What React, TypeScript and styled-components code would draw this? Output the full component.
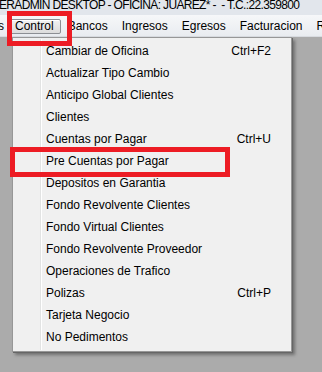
import React from 'react';
import styled, { createGlobalStyle } from 'styled-components';

const COLORS = {
    desktop: '#ababab',
    title: '#e2e6ec',
    menuBg: '#f0f0f0',
    text: '#000000',
    red: '#ed1c24',
    border: '#979797',
};

const GlobalStyle = createGlobalStyle`
    html, body {
        margin: 0;
        padding: 0;
        background: ${COLORS.desktop};
    }
    * {
        box-sizing: border-box;
    }
`;

const Screen = styled.div`
    position: relative;
    width: 322px;
    height: 372px;
    overflow: hidden;
    background: ${COLORS.desktop};
    font-family: 'Liberation Sans', Arial, sans-serif;
    font-size: 12px;
    color: ${COLORS.text};
`;

const TitleBar = styled.div`
    height: 15px;
    background: ${COLORS.title};
    font-size: 12px;
    letter-spacing: -0.65px;
    line-height: 11px;
    white-space: nowrap;
    overflow: hidden;
    margin-left: -1px;
`;

const MenuBar = styled.div`
    height: 22px;
    display: flex;
    align-items: center;
    padding-top: 2px;
    background: linear-gradient(#f6f7f9, #e9ecf0);
    border-bottom: 1px solid #d8dbe0;
    font-size: 12px;
    white-space: nowrap;
    overflow: hidden;
`;

const MenuBarItem = styled.div<{ $active?: boolean }>`
    flex: none;
    height: 15px;
    line-height: 13px;
    padding: 0 6px;
    border: 1px solid ${(p) => (p.$active ? '#8c8f94' : 'transparent')};
    border-radius: 2px;
    background: ${(p) => (p.$active ? 'linear-gradient(#f2f2f2, #dcdcdc)' : 'transparent')};
    box-shadow: ${(p) => (p.$active ? 'inset 1px 1px 0 #fff' : 'none')};
`;

const Dropdown = styled.div`
    position: absolute;
    left: 12px;
    top: 37px;
    width: 280px;
    padding: 2px 0 3px 0;
    background: ${COLORS.menuBg};
    border: 1px solid ${COLORS.border};
    box-shadow: 1px 1px 0 #666, 3px 3px 3px rgba(0, 0, 0, 0.35);
    display: flex;
    flex-direction: column;
`;

const Gutter = styled.div`
    position: absolute;
    left: 27px;
    top: 1px;
    bottom: 1px;
    width: 2px;
    border-left: 1px solid #e2e3e3;
    border-right: 1px solid #ffffff;
`;

const Item = styled.div`
    height: 22px;
    display: flex;
    align-items: center;
    justify-content: space-between;
    padding: 0 20px 0 33px;
    white-space: nowrap;
`;

const Shortcut = styled.span`
    color: ${COLORS.text};
`;

const Highlight = styled.div`
    position: absolute;
    border: 5px solid ${COLORS.red};
    pointer-events: none;
`;

const MENU_ITEMS: { label: string; shortcut?: string }[] = [
    { label: 'Cambiar de Oficina', shortcut: 'Ctrl+F2' },
    { label: 'Actualizar Tipo Cambio' },
    { label: 'Anticipo Global Clientes' },
    { label: 'Clientes' },
    { label: 'Cuentas por Pagar', shortcut: 'Ctrl+U' },
    { label: 'Pre Cuentas por Pagar' },
    { label: 'Depositos en Garantia' },
    { label: 'Fondo Revolvente Clientes' },
    { label: 'Fondo Virtual Clientes' },
    { label: 'Fondo Revolvente Proveedor' },
    { label: 'Operaciones de Trafico' },
    { label: 'Polizas', shortcut: 'Ctrl+P' },
    { label: 'Tarjeta Negocio' },
    { label: 'No Pedimentos' },
];

const TOP_MENU = ['Control', 'Bancos', 'Ingresos', 'Egresos', 'Facturacion', 'Reportes'];

export default function App() {
    return (
        <Screen>
            <GlobalStyle />
            <TitleBar>ERADMIN DESKTOP - OFICINA: JUAREZ* -&nbsp; - T.C.:22.359800</TitleBar>
            <MenuBar>
                <MenuBarItem style={{ marginLeft: -3, paddingLeft: 0, paddingRight: 3 }}>s</MenuBarItem>
                {TOP_MENU.map((name) => (
                    <MenuBarItem key={name} $active={name === 'Control'}>
                        {name}
                    </MenuBarItem>
                ))}
            </MenuBar>
            <Dropdown>
                <Gutter />
                {MENU_ITEMS.map((item) => (
                    <Item key={item.label}>
                        <span>{item.label}</span>
                        {item.shortcut && <Shortcut>{item.shortcut}</Shortcut>}
                    </Item>
                ))}
            </Dropdown>
            <Highlight style={{ left: 7, top: 11, width: 65, height: 35 }} />
            <Highlight style={{ left: 10, top: 147, width: 220, height: 30 }} />
        </Screen>
    );
}
